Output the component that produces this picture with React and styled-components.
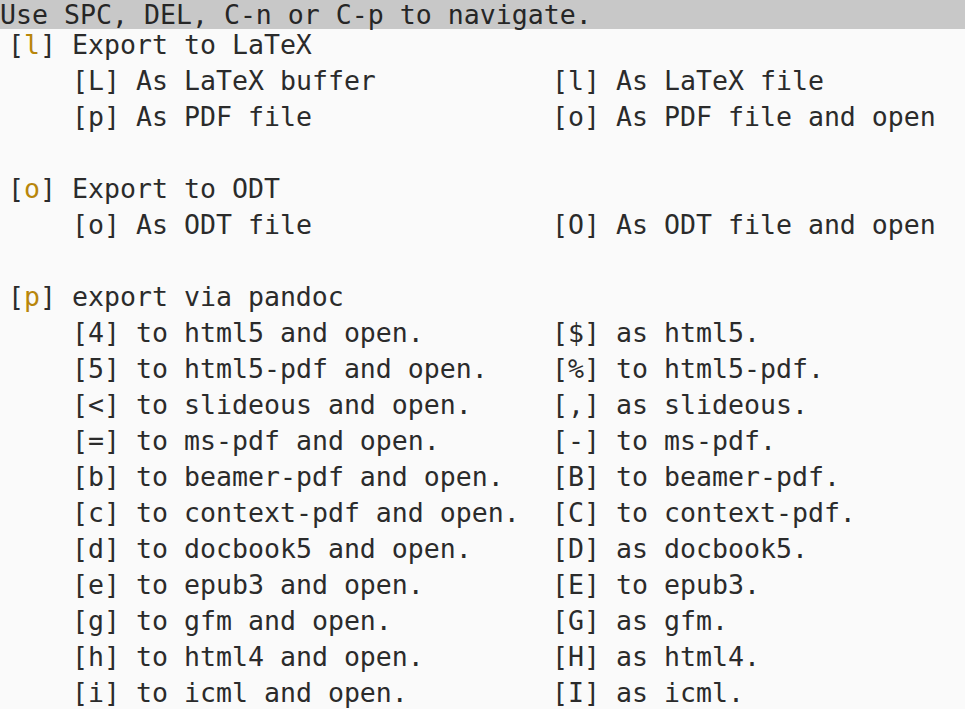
import React from "react";
import styled, { createGlobalStyle } from "styled-components";

const Global = createGlobalStyle`
  html, body { margin: 0; padding: 0; background: #fafafa; overflow: hidden; }
  body { width: 965px; height: 709px; }
`;

const Frame = styled.div`
  width: 965px;
  height: 709px;
  overflow: hidden;
  background: #fafafa;
  color: #2b2b2b;
  font-family: "DejaVu Sans Mono", "Liberation Mono", monospace;
  font-size: 26.57px;
  white-space: pre;
`;

const Header = styled.div`
  position: relative;
  z-index: 1;
  height: 29px;
  line-height: 29px;
  background: #c8c8c8;
  color: #262626;
`;

const Body = styled.div`
  margin-top: -2px;
  padding-left: 8px;
  display: flex;
  flex-direction: column;
`;

const Section = styled.div`
  display: flex;
  flex-direction: column;
  & + & { margin-top: 36px; }
`;

const Title = styled.div`
  height: 36px;
  line-height: 36px;
`;

const Grid = styled.div`
  margin-left: 64px;
  display: grid;
  grid-template-columns: 480px auto;
  grid-auto-rows: 36px;
  line-height: 36px;
`;

const Key = styled.span`
  color: ${(p) => (p.$accent ? "#b8860b" : "inherit")};
`;

const Item = ({ k, label, accent }) => (
  <span>
    [<Key $accent={accent}>{k}</Key>] {label}
  </span>
);

const sections = [
  {
    key: "l",
    title: "Export to LaTeX",
    rows: [
      ["L", "As LaTeX buffer", "l", "As LaTeX file"],
      ["p", "As PDF file", "o", "As PDF file and open"],
    ],
  },
  {
    key: "o",
    title: "Export to ODT",
    rows: [["o", "As ODT file", "O", "As ODT file and open"]],
  },
  {
    key: "p",
    title: "export via pandoc",
    rows: [
      ["4", "to html5 and open.", "$", "as html5."],
      ["5", "to html5-pdf and open.", "%", "to html5-pdf."],
      ["<", "to slideous and open.", ",", "as slideous."],
      ["=", "to ms-pdf and open.", "-", "to ms-pdf."],
      ["b", "to beamer-pdf and open.", "B", "to beamer-pdf."],
      ["c", "to context-pdf and open.", "C", "to context-pdf."],
      ["d", "to docbook5 and open.", "D", "as docbook5."],
      ["e", "to epub3 and open.", "E", "to epub3."],
      ["g", "to gfm and open.", "G", "as gfm."],
      ["h", "to html4 and open.", "H", "as html4."],
      ["i", "to icml and open.", "I", "as icml."],
    ],
  },
];

export default function App() {
  return (
    <Frame>
      <Global />
      <Header>Use SPC, DEL, C-n or C-p to navigate.</Header>
      <Body>
        {sections.map((s) => (
          <Section key={s.key}>
            <Title>
              <Item k={s.key} label={s.title} accent />
            </Title>
            <Grid>
              {s.rows.map((r, i) => (
                <React.Fragment key={i}>
                  <Item k={r[0]} label={r[1]} />
                  <Item k={r[2]} label={r[3]} />
                </React.Fragment>
              ))}
            </Grid>
          </Section>
        ))}
      </Body>
    </Frame>
  );
}
